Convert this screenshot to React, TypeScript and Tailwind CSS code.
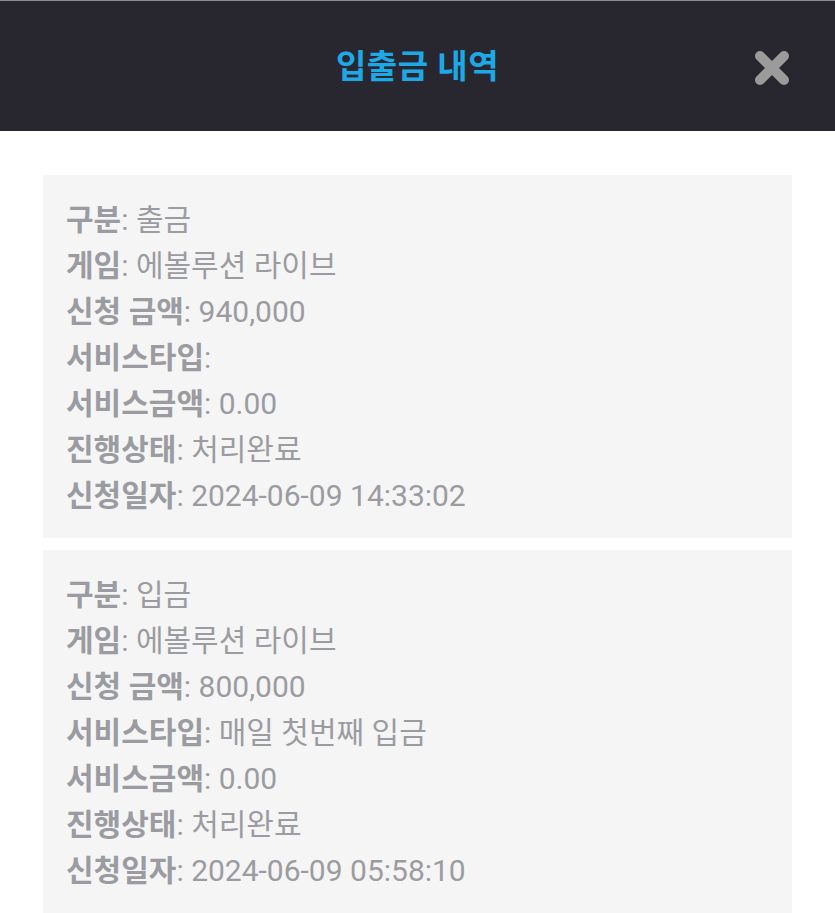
const records = [
  [
    ['구분', '출금'],
    ['게임', '에볼루션 라이브'],
    ['신청 금액', '940,000'],
    ['서비스타입', ''],
    ['서비스금액', '0.00'],
    ['진행상태', '처리완료'],
    ['신청일자', '2024-06-09 14:33:02'],
  ],
  [
    ['구분', '입금'],
    ['게임', '에볼루션 라이브'],
    ['신청 금액', '800,000'],
    ['서비스타입', '매일 첫번째 입금'],
    ['서비스금액', '0.00'],
    ['진행상태', '처리완료'],
    ['신청일자', '2024-06-09 05:58:10'],
  ],
];

const App = () => {
  return (
    <div
      className="min-h-screen w-full bg-white"
      style={{ fontFamily: 'Roboto, "Noto Sans CJK KR", sans-serif' }}
    >
      {/* Header */}
      <div className="relative h-[131px] bg-[#28272f] border-t border-[#8c8c92] flex items-center justify-center">
        <h1 className="text-[33px] font-bold text-[#1da8e6] tracking-[0.5px] pt-[2px]">입출금 내역</h1>
        <button className="absolute right-[44px] top-[48px] w-[38px] h-[38px] flex items-center justify-center">
          <svg width="36" height="36" viewBox="0 0 36 36">
            <path d="M6 6 L30 30 M30 6 L6 30" stroke="#9b9b9b" strokeWidth="10" strokeLinecap="round" />
          </svg>
        </button>
      </div>

      {/* List */}
      <main className="px-[43px] pt-[44px] flex flex-col gap-[12px]">
        {records.map((rows, i) => (
          <div key={i} className="w-[749px] bg-[#f5f5f5] pt-[22px] pb-[19px] px-[23px]">
            {rows.map(([label, value]) => (
              <div key={label} className="h-[46px] flex items-center text-[30px] text-[#9b9ca1] leading-none">
                <span className="font-bold">{label}</span>
                <span>:&nbsp;{value}</span>
              </div>
            ))}
          </div>
        ))}
      </main>
    </div>
  );
};

export default App;
